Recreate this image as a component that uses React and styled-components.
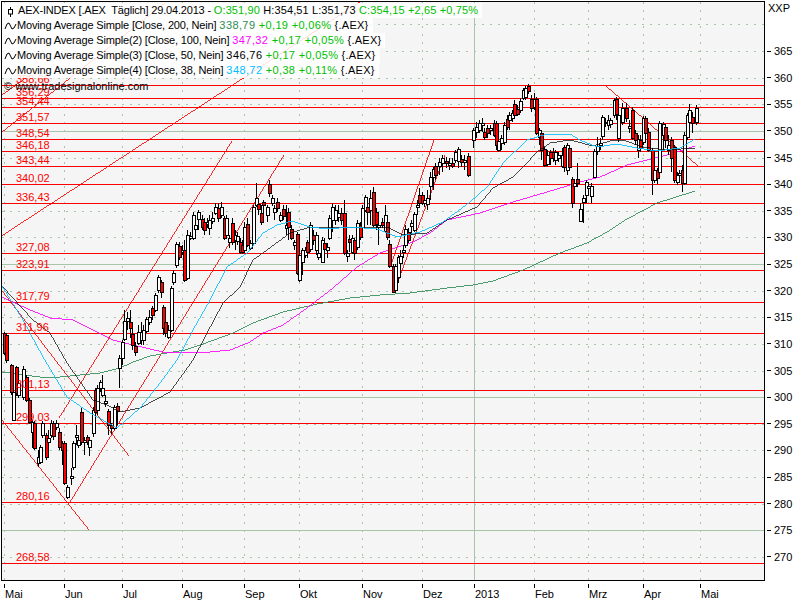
import React from "react";
import styled, { createGlobalStyle } from "styled-components";

const Y0 = 51;
const PX = 5.325;
const yOf = (p) => Math.round(Y0 + (365 - p) * PX);
const FONT = `"Liberation Sans", Arial, sans-serif`;

const GlobalStyle = createGlobalStyle`
  html, body { margin: 0; padding: 0; background: #fff; }
  body { width: 800px; height: 600px; overflow: hidden; font-family: ${FONT}; }
`;

const Page = styled.div`
  width: 800px;
  height: 600px;
  padding: 1px 0 0 1px;
  box-sizing: border-box;
  display: flex;
  flex-direction: column;
  color: #000;
  font-size: 11px;
`;
const TopRow = styled.div`
  display: flex;
  height: 580px;
`;
const Plot = styled.div`
  position: relative;
  width: 762px;
  height: 578px;
  border: 1px solid #000;
  background: #f5f5f5;
  flex: none;
`;
const ChartSvg = styled.svg`
  display: block;
`;
const LevelLabel = styled.text`
  font-family: ${FONT};
  font-size: 11px;
  fill: #ff0000;
`;
const Legend = styled.div`
  position: absolute;
  left: 0;
  top: 1px;
  display: flex;
  flex-direction: column;
  align-items: flex-start;
`;
const LegendRow = styled.div`
  display: flex;
  align-items: center;
  height: 15px;
  padding-right: 4px;
  background: rgba(255, 255, 255, 0.85);
  white-space: pre;
  line-height: 15px;
`;
const RowIcon = styled.svg`
  flex: none;
  width: ${(p) => p.$w}px;
  height: 15px;
`;
const Val = styled.span`
  color: ${(p) => p.$c || "#000"};
  letter-spacing: ${(p) => p.$ls || 0}px;
`;
const Copyright = styled.div`
  height: 15px;
  line-height: 15px;
  padding: 1px 0 0 2px;
  white-space: pre;
`;
const PriceAxis = styled.div`
  display: flex;
  flex-direction: column;
  width: 35px;
`;
const AxisName = styled.div`
  height: 36.7px;
  flex: none;
  padding: 1px 0 0 3px;
  box-sizing: border-box;
  line-height: 13px;
`;
const PriceRow = styled.div`
  height: 26.63px;
  flex: none;
  display: flex;
  align-items: center;
  gap: 3px;
  padding-left: 2px;
`;
const PriceTick = styled.span`
  width: 4px;
  height: 1px;
  background: #000;
  flex: none;
`;
const TimeAxis = styled.div`
  display: flex;
  padding-left: 3px;
  margin-top: 1px;
`;
const TimeCell = styled.div`
  width: ${(p) => p.$w}px;
  flex: none;
  display: flex;
  flex-direction: column;
`;
const TimeTick = styled.span`
  width: 1px;
  height: 4px;
  margin-top: 2px;
  background: #000;
`;
const TimeLabel = styled.span`
  line-height: 13px;
  padding-left: 1px;
  white-space: pre;
`;

const levels = [
  ["358,66", 85], ["356,29", 98], ["354,44", 107], ["351,57", 123], ["348,54", 139], ["346,18", 151],
  ["343,44", 166], ["340,02", 184], ["336,43", 203], ["327,08", 253], ["323,91", 270], ["317,79", 302],
  ["311,96", 333], ["301,13", 390], ["299,03", 423], ["280,16", 502], ["268,58", 563],
];
const months = [
  ["Mai", 4], ["Jun", 64], ["Jul", 122], ["Aug", 182], ["Sep", 244], ["Okt", 299], ["Nov", 362],
  ["Dez", 422], ["2013", 474], ["Feb", 534], ["Mrz", 588], ["Apr", 643], ["Mai", 700],
];
const prices = [];
for (let p = 365; p >= 270; p -= 5) prices.push(p);

const trends = [
  [0, 237, 363, 0], [2, 132, 165, 3], [2, 95, 30, 75],
  [59, 418, 232, 141], [70, 502, 284, 155], [392, 262, 434, 140], [394, 292, 445, 155],
  [2, 420, 89, 530], [0, 288, 129, 456], [606, 86, 698, 166],
];

const ma200 = "2,372 40,377 60,377 100,373 120,368 133,362 150,356 167,353 185,350 200,345 233,333 253,323 283,312 317,304 350,298 380,295 410,293 447,288 473,285 493,281 523,270 560,253 587,243 607,232 627,219 657,203 695,191";
const ma100 = "2,297 30,310 50,318 73,320 93,330 113,340 133,345 163,352 200,353 230,350 250,342 263,333 283,325 307,308 333,288 357,267 380,253 413,242 430,233 447,220 480,213 513,202 547,192 580,182 600,177 627,165 667,155 683,150 695,146";
const ma50 = "2,286 33,320 50,333 67,363 93,400 107,405 120,412 140,408 170,392 193,360 207,333 223,303 240,287 253,260 267,250 290,233 307,228 320,227 343,227 370,228 387,227 403,235 427,233 447,220 477,207 493,188 513,177 523,167 537,152 550,143 570,140 593,146 610,141 623,140 643,147 667,150 695,148";
const ma38 = "2,286 23,320 43,357 67,397 90,413 117,428 140,408 160,383 177,360 193,330 210,300 227,267 247,253 263,233 277,225 292,221 310,227 327,229 350,227 377,229 397,237 420,232 443,222 470,202 487,187 503,163 527,140 547,134 570,134 580,140 597,147 617,144 637,148 657,151 680,148 695,139";

const c = [
[4,333,353,1,332,355],[6,335,360,1,334,363],[11,365,392,1,364,395],[13,392,420,0,390,421],[16,367,393,1,366,396],[18,383,395,0,380,398],[23,369,397,0,366,400],[26,377,400,1,375,402],[29,400,422,1,398,424],[32,422,432,0,420,448],[34,423,448,1,421,450],[38,457,463,0,450,467],[40,447,462,0,445,464],[42,423,435,0,421,438],[46,435,457,1,433,460],[48,438,442,0,430,446],[51,423,435,0,420,438],[53,423,436,1,421,440],[56,423,427,0,420,430],[59,432,447,1,428,450],[62,443,450,1,441,465],[64,443,483,1,441,485],[67,487,497,0,485,499],[71,476,478,0,468,485],[73,443,467,0,441,470],[76,435,437,0,425,445],[78,440,445,0,435,448],[81,412,442,1,408,445],[84,440,442,0,437,455],[87,437,442,1,435,445],[89,440,447,0,437,456],[93,410,433,0,407,437],[95,390,412,1,388,414],[97,388,410,0,385,415],[100,382,388,0,380,392],[102,388,395,0,375,397],[105,401,403,0,395,407],[108,411,425,1,409,435],[111,425,428,1,423,434],[114,407,428,0,405,430],[117,406,411,1,403,425],[119,358,368,0,355,388],[122,342,358,0,340,365],[124,321,339,0,310,341],[127,318,321,0,312,330],[130,322,328,1,310,338],[132,334,345,1,328,350],[135,346,352,1,342,356],[138,332,343,0,325,345],[141,332,340,0,322,345],[143,330,340,0,325,345],[146,319,331,0,317,333],[149,317,322,0,310,325],
[152,308,315,1,306,320],[155,295,310,0,293,312],[158,277,290,0,275,293],[161,282,292,1,280,298],[163,307,328,1,305,335],[165,322,333,1,320,337],[168,330,337,0,325,339],[171,288,330,0,286,332],[173,273,282,0,270,285],[176,244,265,0,242,268],[179,246,257,1,242,260],[182,250,252,0,245,255],[184,250,280,1,240,282],[187,235,278,0,230,280],[190,236,238,0,232,240],[193,215,238,0,212,240],[195,225,229,0,222,234],[198,212,219,0,210,230],[202,219,227,1,215,230],[204,222,230,1,218,235],[207,222,224,0,218,228],[209,220,228,0,215,235],[212,218,221,0,212,224],[215,207,213,0,203,215],[218,208,218,1,203,222],[221,207,215,0,202,218],[224,218,238,1,216,240],[226,218,235,0,215,238],[229,238,242,0,235,248],[232,223,242,1,218,245],[235,235,240,0,230,250],[237,236,241,0,232,245],[240,242,252,1,238,254],[242,245,252,1,240,254],[244,227,250,0,222,252],[247,224,245,1,218,247],[250,243,248,0,240,250],[253,207,243,0,205,245],[256,198,205,0,183,207],[258,204,209,1,200,215],[261,213,222,1,205,225],[263,202,205,1,200,215],[267,207,215,0,205,222],[269,184,193,1,180,197],[272,198,203,0,195,206],[274,208,212,0,205,220],[277,202,208,1,198,212],[280,215,220,0,212,222],[283,209,216,1,205,220],[286,225,228,0,205,235],[288,212,227,1,208,240],[291,229,238,1,225,240],[294,242,245,0,240,250],[297,234,273,1,232,275],[299,255,280,0,250,282],[302,250,262,0,248,275],[305,250,255,0,247,258],[307,242,252,1,240,258],[310,225,249,0,222,252],[313,235,240,1,230,245],[316,235,250,0,232,255],[318,253,257,0,250,260],[322,240,262,0,237,263],[324,243,249,1,238,252],[327,247,250,0,243,258],[329,218,238,0,215,240],[332,207,220,0,203,232],[335,210,220,0,205,225],[338,213,217,0,205,222],[341,213,220,1,208,225],[344,213,253,1,200,255],[347,253,256,0,250,262],[349,239,242,1,235,252],[352,238,252,0,235,254],[354,240,253,1,238,260],[357,223,247,0,220,250],[360,225,237,1,222,240],[362,208,227,0,205,229],[365,197,210,0,195,212],[367,207,212,1,200,225],[370,198,210,0,190,225],[373,192,225,1,187,227],[376,212,224,1,208,230],[378,225,227,0,220,245],[382,222,225,1,218,228],[385,215,231,0,205,233],[387,222,237,1,215,240],[389,244,266,1,240,268],[393,266,292,1,264,293],[395,266,290,0,264,292],[398,257,277,0,255,283],[400,256,263,0,250,277],[403,250,252,0,245,258],[405,229,245,0,225,248],[408,232,240,1,228,243],[411,223,226,0,220,235],[414,214,230,0,212,232],[417,205,207,0,200,215],[419,195,203,1,188,205],[422,195,203,1,192,205],[424,200,203,0,195,207],[427,198,204,0,190,210],[430,177,186,0,172,200],[433,169,177,0,167,190],[435,166,175,1,163,180],[439,162,166,0,158,175],[442,158,163,0,155,172],[446,161,163,1,157,168],[449,163,165,0,158,170],[452,163,166,1,158,168],[455,152,160,0,150,163],[458,149,161,0,147,168],[461,159,162,1,155,167],[464,160,162,0,155,170],[468,156,175,1,153,177],
[473,130,140,0,128,148],[476,127,132,0,122,138],[479,123,130,0,120,133],[482,123,125,0,118,132],[484,132,137,1,128,140],[487,128,133,1,125,138],[490,128,130,0,125,135],[494,123,135,1,120,137],[496,123,145,1,121,150],[498,141,150,0,138,152],[501,138,143,0,135,150],[504,125,142,0,122,145],[507,119,127,1,115,130],[509,115,120,0,112,130],[512,113,118,0,110,122],[514,104,115,1,100,118],[517,109,114,1,105,116],[520,101,110,0,98,113],[523,90,98,0,88,100],[525,88,97,0,86,100],[528,86,91,1,84,94],[531,99,108,1,95,112],[534,99,107,0,93,110],[536,99,133,1,97,135],[539,130,137,0,128,145],[541,133,150,1,130,160],[544,149,165,1,147,167],[547,155,164,0,150,166],[550,152,158,1,150,165],[553,152,158,1,148,162],[555,152,160,0,150,165],[558,155,158,0,152,162],[562,155,166,0,148,168],[564,147,167,1,145,172],[567,145,170,0,143,175],[569,148,167,1,146,169],[572,179,203,1,177,208],[574,183,186,0,180,190],[577,179,183,1,163,187],[580,209,221,0,203,222],[583,198,202,0,195,223],[586,182,195,0,180,203],[588,186,188,0,183,195],[591,186,196,0,183,203],[594,151,177,0,149,178],[597,146,151,0,137,155],[600,143,145,0,138,150],[602,117,136,0,115,140],[605,122,123,0,118,127],[608,120,125,0,115,130],[610,120,124,0,118,128],[614,100,115,0,98,118],[616,99,114,1,97,120],[618,115,138,0,113,142],[622,108,122,0,103,125],[626,108,118,1,103,122],[629,126,128,0,120,133],[632,110,138,1,107,140],[635,133,140,1,130,145],[638,139,150,0,135,158],[640,140,148,1,135,152],[643,118,142,0,116,145],[645,118,133,1,116,138],[648,132,150,1,128,152],[652,150,180,1,148,195],[654,170,180,0,168,183],[657,170,178,1,168,184],[659,123,172,0,121,174],[663,124,135,0,122,150],[665,127,140,1,125,148],[668,145,150,0,135,155],[671,140,158,1,137,172],[674,147,180,1,145,183],[677,175,182,0,172,185],[679,173,175,0,170,180],[682,170,183,1,165,192],[684,135,183,0,132,185],[687,115,137,0,113,140],[689,110,122,0,104,125],[692,117,123,1,112,133],[696,108,122,0,105,125],
];

const GRID = "#a9c5a9";

function Chart() {
  return (
    <ChartSvg width="762" height="578" viewBox="2 2 762 578" shapeRendering="crispEdges">
      {[370, ...prices].map((p) => (
        <line key={p} x1="2" x2="764" y1={yOf(p) + 0.5} y2={yOf(p) + 0.5} stroke={GRID}
          strokeDasharray={p % 25 === 0 ? undefined : "2 6"} />
      ))}
      {months.map(([m, x]) => (
        <line key={m + x} x1={x + 0.5} x2={x + 0.5} y1="2" y2="580" stroke={GRID}
          strokeDasharray={m === "2013" ? undefined : "2 6"} />
      ))}
      {levels.map(([t, y]) => (
        <line key={t} x1="2" x2="764" y1={y + 0.5} y2={y + 0.5} stroke="#ff0000" />
      ))}
      {trends.map(([a, b, d, e]) => (
        <line key={`${a}-${b}`} x1={a} y1={b} x2={d} y2={e} stroke="#ff0000" strokeWidth="0.85" />
      ))}
      <polyline points={ma200} fill="none" stroke="#2e8b57" strokeWidth="0.85" />
      <polyline points={ma100} fill="none" stroke="#ff00ff" strokeWidth="0.85" />
      {c.map(([x, t, b, r, wt, wb]) => (
        <g key={x}>
          <line x1={x + 0.5} x2={x + 0.5} y1={wt} y2={wb} stroke="#000" />
          <rect x={x - 1 + 0.5} y={t + 0.5} width="2.6" height={Math.max(b - t, 1)}
            fill={r ? "#ff0000" : "#ffffff"} stroke="#000" />
        </g>
      ))}
      <polyline points={ma50} fill="none" stroke="#000" strokeWidth="0.7" />
      <polyline points={ma38} fill="none" stroke="#00bfff" strokeWidth="0.85" />
      {levels.map(([t, y]) => (
        <LevelLabel key={t} x="16" y={y - 2} shapeRendering="auto">{t}</LevelLabel>
      ))}
    </ChartSvg>
  );
}

const WaveIcon = () => (
  <RowIcon $w={15} viewBox="0 0 15 15">
    <polyline points="3,11 5,6 7,5 9,9 10,11 12,10 14,6" fill="none" stroke="#000" strokeWidth="1" />
  </RowIcon>
);
const CandleIcon = () => (
  <RowIcon $w={16} viewBox="0 0 16 15">
    <path d="M8.5 4V6M8.5 11V14" stroke="#000" fill="none" />
    <rect x="6.5" y="6.5" width="4" height="4.5" fill="none" stroke="#000" />
  </RowIcon>
);

const G = "#00c000";
const maRows = [
  ["Moving Average Simple [Close, 200, Nein] ", "338,79", "#2e8b57", "+0,19 +0,06%"],
  ["Moving Average Simple(2) [Close, 100, Nein] ", "347,32", "#ff00ff", "+0,17 +0,05%"],
  ["Moving Average Simple(3) [Close, 50, Nein] ", "346,76", "#000", "+0,17 +0,05%"],
  ["Moving Average Simple(4) [Close, 38, Nein] ", "348,72", "#00bfff", "+0,38 +0,11%"],
];

export default function App() {
  return (
    <Page>
      <GlobalStyle />
      <TopRow>
        <Plot>
          <Chart />
          <Legend>
            <LegendRow>
              <CandleIcon />
              <Val $ls={-0.18}>{"AEX-INDEX [.AEX  Täglich] 29.04.2013 - "}</Val>
              <Val $c={G} $ls={0.12}>O:351,90</Val>
              <Val $ls={0.12}> H:354,51 L:351,73 </Val>
              <Val $c={G} $ls={0.15}>C:354,15 +2,65 +0,75%</Val>
            </LegendRow>
            {maRows.map(([a, v, col, d]) => (
              <LegendRow key={a}>
                <WaveIcon />
                <Val $ls={-0.16}>{a}</Val>
                <Val $c={col} $ls={0.4}>{v}</Val>
                <Val $c={G} $ls={0.33}> {d}</Val>
                <Val $ls={0.25}> {"{.AEX}"}</Val>
              </LegendRow>
            ))}
            <Copyright>© www.tradesignalonline.com</Copyright>
          </Legend>
        </Plot>
        <PriceAxis>
          <AxisName>XXP</AxisName>
          {prices.map((p) => (
            <PriceRow key={p}>
              <PriceTick />
              <span>{p}</span>
            </PriceRow>
          ))}
        </PriceAxis>
      </TopRow>
      <TimeAxis>
        {months.map(([m, x], i) => (
          <TimeCell key={m + x} $w={(months[i + 1] ? months[i + 1][1] : 790) - x}>
            <TimeTick />
            <TimeLabel>{m}</TimeLabel>
          </TimeCell>
        ))}
      </TimeAxis>
    </Page>
  );
}
